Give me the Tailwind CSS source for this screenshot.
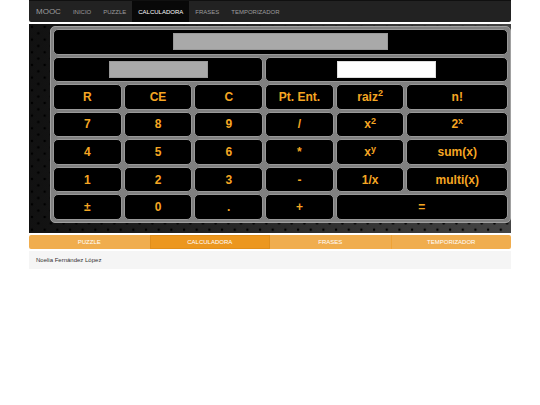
<!DOCTYPE html>
<html lang="es">
<head>
  <meta charset="UTF-8">
  <meta name="viewport" content="width=device-width, initial-scale=1.0">
  <title>MOOC - Calculadora</title>
  <script src="https://cdn.jsdelivr.net/npm/@tailwindcss/browser@4"></script>
</head>
<body class="bg-white font-['Liberation_Sans',sans-serif] text-[6px] leading-3 text-[#333]">
  <div class="mx-[29px]">

    <nav class="flex h-[22px] items-stretch rounded-b-xs border-t border-[#101010] bg-[#222] pl-px text-[#9d9d9d]">
      <a href="#" class="flex items-center px-[6px] text-[8px]">MOOC</a>
      <a href="#" class="flex items-center px-[6px]">INICIO</a>
      <a href="#" class="flex items-center px-[6px]">PUZZLE</a>
      <a href="#" class="flex items-center bg-[#080808] px-[6px] text-white">CALCULADORA</a>
      <a href="#" class="flex items-center px-[6px]">FRASES</a>
      <a href="#" class="flex items-center px-[6px]">TEMPORIZADOR</a>
    </nav>

    <main class="relative mt-[2px] bg-linear-to-r from-[#111] to-[#444] pt-[2px] pb-[10px] pl-[21px]">
      <svg class="absolute inset-0 h-full w-full" aria-hidden="true">
        <defs>
          <pattern id="holes" width="12.67" height="12.67" patternUnits="userSpaceOnUse">
            <circle cx="3" cy="3" r="1.2" fill="#000"/>
            <circle cx="9.3" cy="9.3" r="1.2" fill="#000"/>
          </pattern>
        </defs>
        <rect width="100%" height="100%" fill="url(#holes)"/>
      </svg>

      <form class="relative rounded-[5px] border border-[#a0a0a0] bg-[#808080] p-[2px]">
        <div class="grid h-[191px] auto-rows-fr grid-cols-[69fr_69fr_69fr_69fr_69fr_102fr] gap-[2px] text-[12px] font-bold text-[#f5a623] *:rounded-[5px] *:border *:border-[#999] *:bg-black">
          <div class="col-span-6 flex items-center justify-center">
            <input type="text" aria-label="Pantalla" readonly class="h-[17px] w-[215px] border border-[#999] bg-[#a9a9a9]">
          </div>
          <div class="col-span-3 flex items-center justify-center">
            <input type="text" aria-label="Memoria" readonly class="h-[17px] w-[99px] border border-[#999] bg-[#a9a9a9]">
          </div>
          <div class="col-span-3 flex items-center justify-center">
            <input type="text" aria-label="Lista de números" class="h-[17px] w-[99px] border border-[#ddd] bg-white">
          </div>

          <button type="button">R</button>
          <button type="button">CE</button>
          <button type="button">C</button>
          <button type="button">Pt. Ent.</button>
          <button type="button">raiz<sup class="text-[9px]">2</sup></button>
          <button type="button">n!</button>

          <button type="button">7</button>
          <button type="button">8</button>
          <button type="button">9</button>
          <button type="button">/</button>
          <button type="button">x<sup class="text-[9px]">2</sup></button>
          <button type="button">2<sup class="text-[9px]">x</sup></button>

          <button type="button">4</button>
          <button type="button">5</button>
          <button type="button">6</button>
          <button type="button">*</button>
          <button type="button">x<sup class="text-[9px]">y</sup></button>
          <button type="button">sum(x)</button>

          <button type="button">1</button>
          <button type="button">2</button>
          <button type="button">3</button>
          <button type="button">-</button>
          <button type="button">1/x</button>
          <button type="button">multi(x)</button>

          <button type="button">±</button>
          <button type="button">0</button>
          <button type="button">.</button>
          <button type="button">+</button>
          <button type="button" class="col-span-2">=</button>
        </div>
      </form>
    </main>

    <div class="mt-[2px] grid h-[14px] grid-cols-4 rounded-xs bg-[#f0ad4e] text-center text-white">
      <a href="#" class="flex items-center justify-center">PUZZLE</a>
      <a href="#" class="flex items-center justify-center border border-[#e08e1b] bg-[#ec971f]">CALCULADORA</a>
      <a href="#" class="flex items-center justify-center">FRASES</a>
      <a href="#" class="flex items-center justify-center border-l border-[#eea236]">TEMPORIZADOR</a>
    </div>

    <footer class="mt-[2px] bg-[#f5f5f5] px-[7px] py-[3px]">Noelia Fernández López</footer>
  </div>
</body>
</html>
